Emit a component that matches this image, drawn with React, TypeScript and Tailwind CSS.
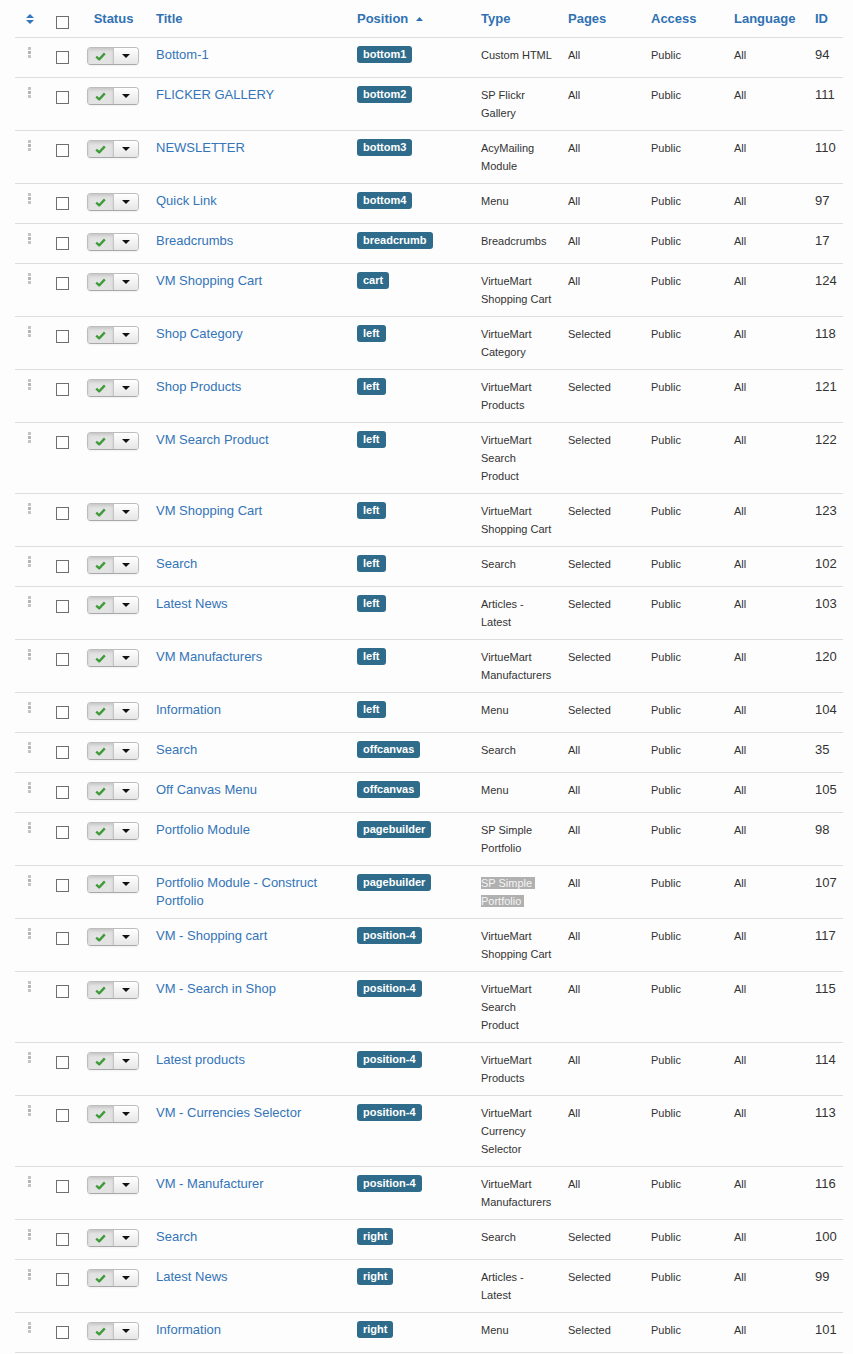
import React from 'react';

type Row = {
    title: string[];
    pos: string;
    type: string[];
    pages: string;
    id: number;
    hl?: boolean;
};

const rows: Row[] = [
    { title: ['Bottom-1'], pos: 'bottom1', type: ['Custom HTML'], pages: 'All', id: 94 },
    { title: ['FLICKER GALLERY'], pos: 'bottom2', type: ['SP Flickr', 'Gallery'], pages: 'All', id: 111 },
    { title: ['NEWSLETTER'], pos: 'bottom3', type: ['AcyMailing', 'Module'], pages: 'All', id: 110 },
    { title: ['Quick Link'], pos: 'bottom4', type: ['Menu'], pages: 'All', id: 97 },
    { title: ['Breadcrumbs'], pos: 'breadcrumb', type: ['Breadcrumbs'], pages: 'All', id: 17 },
    { title: ['VM Shopping Cart'], pos: 'cart', type: ['VirtueMart', 'Shopping Cart'], pages: 'All', id: 124 },
    { title: ['Shop Category'], pos: 'left', type: ['VirtueMart', 'Category'], pages: 'Selected', id: 118 },
    { title: ['Shop Products'], pos: 'left', type: ['VirtueMart', 'Products'], pages: 'Selected', id: 121 },
    { title: ['VM Search Product'], pos: 'left', type: ['VirtueMart', 'Search', 'Product'], pages: 'Selected', id: 122 },
    { title: ['VM Shopping Cart'], pos: 'left', type: ['VirtueMart', 'Shopping Cart'], pages: 'Selected', id: 123 },
    { title: ['Search'], pos: 'left', type: ['Search'], pages: 'Selected', id: 102 },
    { title: ['Latest News'], pos: 'left', type: ['Articles -', 'Latest'], pages: 'Selected', id: 103 },
    { title: ['VM Manufacturers'], pos: 'left', type: ['VirtueMart', 'Manufacturers'], pages: 'Selected', id: 120 },
    { title: ['Information'], pos: 'left', type: ['Menu'], pages: 'Selected', id: 104 },
    { title: ['Search'], pos: 'offcanvas', type: ['Search'], pages: 'All', id: 35 },
    { title: ['Off Canvas Menu'], pos: 'offcanvas', type: ['Menu'], pages: 'All', id: 105 },
    { title: ['Portfolio Module'], pos: 'pagebuilder', type: ['SP Simple', 'Portfolio'], pages: 'All', id: 98 },
    { title: ['Portfolio Module - Construct', 'Portfolio'], pos: 'pagebuilder', type: ['SP Simple', 'Portfolio'], pages: 'All', id: 107, hl: true },
    { title: ['VM - Shopping cart'], pos: 'position-4', type: ['VirtueMart', 'Shopping Cart'], pages: 'All', id: 117 },
    { title: ['VM - Search in Shop'], pos: 'position-4', type: ['VirtueMart', 'Search', 'Product'], pages: 'All', id: 115 },
    { title: ['Latest products'], pos: 'position-4', type: ['VirtueMart', 'Products'], pages: 'All', id: 114 },
    { title: ['VM - Currencies Selector'], pos: 'position-4', type: ['VirtueMart', 'Currency', 'Selector'], pages: 'All', id: 113 },
    { title: ['VM - Manufacturer'], pos: 'position-4', type: ['VirtueMart', 'Manufacturers'], pages: 'All', id: 116 },
    { title: ['Search'], pos: 'right', type: ['Search'], pages: 'Selected', id: 100 },
    { title: ['Latest News'], pos: 'right', type: ['Articles -', 'Latest'], pages: 'Selected', id: 99 },
    { title: ['Information'], pos: 'right', type: ['Menu'], pages: 'Selected', id: 101 },
];

const gridCols = 'grid grid-cols-[33px_31px_69px_201px_124px_87px_83px_83px_81px_36px]';

const Checkbox = () => (
    <span className="block w-[13px] h-[13px] border border-[#6f6f6f] bg-white" />
);

const DragHandle = () => (
    <span className="flex flex-col gap-[1px] w-[3px]">
        <span className="block w-[3px] h-[3px] bg-[#c4c4c4]" />
        <span className="block w-[3px] h-[3px] bg-[#b5b5b5]" />
        <span className="block w-[3px] h-[3px] bg-[#c4c4c4]" />
    </span>
);

const StatusButton = () => (
    <div className="flex h-[18px] w-[52px] rounded-[4px] border border-[#bdbdbd] border-b-[#a8a8a8] overflow-hidden shadow-[0_1px_2px_rgba(0,0,0,0.05)]">
        <span className="flex items-center justify-center w-[26px] bg-[#e3e3e3] shadow-[inset_0_2px_3px_rgba(0,0,0,0.12)] border-r border-[#c4c4c4]">
            <svg width="11" height="9" viewBox="0 0 11 9">
                <path d="M1.2 4.6 L4.2 7.4 L9.8 1.4" fill="none" stroke="#3f9a3a" strokeWidth="2.3" strokeLinejoin="round" />
            </svg>
        </span>
        <span className="flex items-center justify-center flex-1 bg-gradient-to-b from-white to-[#e6e6e6]">
            <svg width="8" height="4" viewBox="0 0 8 4">
                <path d="M0 0 L8 0 L4 4 Z" fill="#111" />
            </svg>
        </span>
    </div>
);

const Th: React.FC<{ children?: React.ReactNode; className?: string }> = ({ children, className = '' }) => (
    <div className={`px-2 pt-[10px] text-[13px] leading-[18px] font-bold text-[#3071b3] ${className}`}>{children}</div>
);

export default function App() {
    return (
        <div className="min-h-screen bg-[#fdfdfd] font-['Liberation_Sans',Arial,sans-serif] text-[#333]">
            <div className="ml-[15px] w-[828px]">
                {/* header */}
                <div className={`${gridCols} h-[37px]`}>
                    <div className="pl-[11px] pt-[14px]">
                        <svg className="block" width="8" height="10" viewBox="0 0 8 10">
                            <path d="M4 0 L8 4 L0 4 Z" fill="#3577bd" />
                            <path d="M0 6 L8 6 L4 10 Z" fill="#3577bd" />
                        </svg>
                    </div>
                    <div className="px-2 pt-[16px]">
                        <Checkbox />
                    </div>
                    <Th className="text-center">Status</Th>
                    <Th>Title</Th>
                    <Th className="flex items-start">
                        Position
                        <svg className="ml-[8px] mt-[7px]" width="7" height="4" viewBox="0 0 7 4">
                            <path d="M3.5 0 L7 4 L0 4 Z" fill="#3071b3" />
                        </svg>
                    </Th>
                    <Th>Type</Th>
                    <Th>Pages</Th>
                    <Th>Access</Th>
                    <Th>Language</Th>
                    <Th>ID</Th>
                </div>

                {/* rows */}
                {rows.map((r, i) => (
                    <div key={i} className={`${gridCols} border-t border-[#dddddd] ${i === rows.length - 1 ? 'border-b' : ''}`}>
                        <div className="pl-[13px] pt-[9px] pb-2">
                            <DragHandle />
                        </div>
                        <div className="px-2 pt-[13px] pb-2">
                            <Checkbox />
                        </div>
                        <div className="px-2 py-2">
                            <div className="h-[23px] pt-[1px]">
                                <StatusButton />
                            </div>
                        </div>
                        <div className="px-2 py-2 text-[13px] leading-[18px] text-[#3474b8]">
                            {r.title.map((t, k) => (
                                <div key={k} className="whitespace-nowrap">{t}</div>
                            ))}
                        </div>
                        <div className="px-2 pt-[8px] pb-2">
                            <span className="block w-fit h-[17px] px-[6px] rounded-[3px] bg-[#2f6c8b] text-white text-[11px] leading-[17px] font-bold">
                                {r.pos}
                            </span>
                        </div>
                        <div className="px-2 py-2 text-[11px] leading-[18px] text-[#333]">
                            {r.type.map((t, k) => (
                                <div key={k} className="whitespace-nowrap">
                                    {r.hl ? (
                                        <span className="bg-[#b0b0b0] text-[#f4f4f4]">{t}{'\u00a0'}</span>
                                    ) : (
                                        t
                                    )}
                                </div>
                            ))}
                        </div>
                        <div className="px-2 py-2 text-[11px] leading-[18px]">{r.pages}</div>
                        <div className="px-2 py-2 text-[11px] leading-[18px]">Public</div>
                        <div className="px-2 py-2 text-[11px] leading-[18px]">All</div>
                        <div className="px-2 py-2 text-[13px] leading-[18px]">{r.id}</div>
                    </div>
                ))}
            </div>
        </div>
    );
}
